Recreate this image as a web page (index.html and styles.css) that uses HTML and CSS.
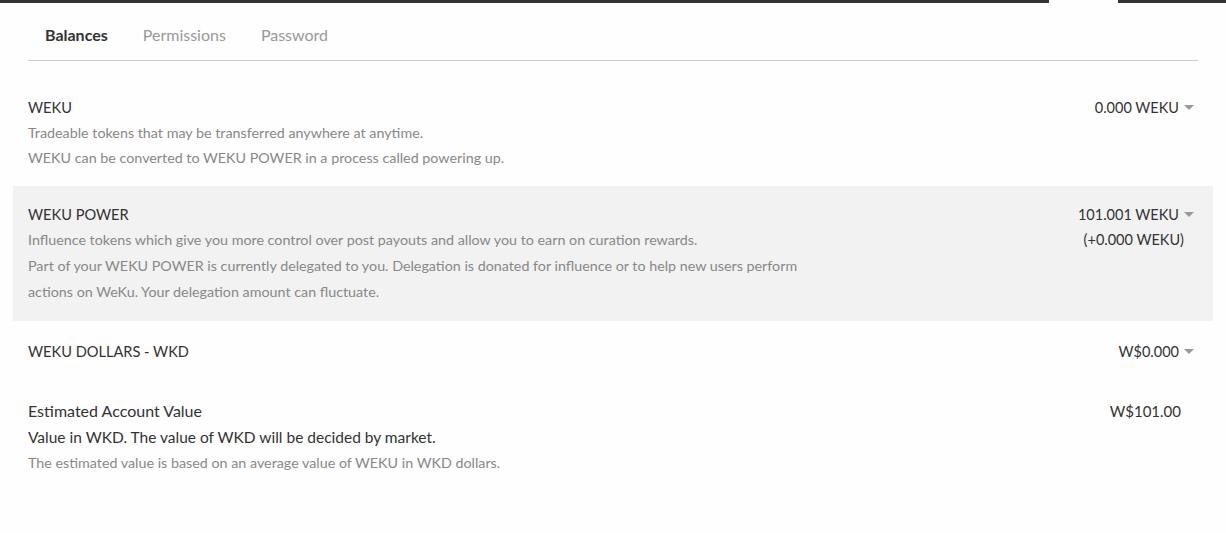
FILE: index.html
```html
<!DOCTYPE html>
<html lang="en">
<head>
<meta charset="utf-8">
<title>Wallet</title>
<link rel="stylesheet" href="styles.css">
</head>
<body>
<div class="topbar"><span class="seg dark left"></span><span class="seg gap"></span><span class="seg dark right"></span></div>
<div class="container">
  <nav class="tabs">
    <a class="tab active">Balances</a>
    <a class="tab">Permissions</a>
    <a class="tab">Password</a>
  </nav>

  <div class="row">
    <div class="info">
      <div class="title">WEKU</div>
      <div class="desc">Tradeable tokens that may be transferred anywhere at anytime.</div>
      <div class="desc">WEKU can be converted to WEKU POWER in a process called powering up.</div>
    </div>
    <div class="amount">
      <div class="dd">0.000 WEKU <span class="caret"></span></div>
    </div>
  </div>

  <div class="row zebra">
    <div class="info">
      <div class="title">WEKU POWER</div>
      <div class="desc">Influence tokens which give you more control over post payouts and allow you to earn on curation rewards.</div>
      <div class="desc narrow">Part of your WEKU POWER is currently delegated to you. Delegation is donated for influence or to help new users perform actions on WeKu. Your delegation amount can fluctuate.</div>
    </div>
    <div class="amount">
      <div class="dd">101.001 WEKU <span class="caret"></span></div>
      <div class="delegated">(+0.000 WEKU)</div>
    </div>
  </div>

  <div class="row wkd">
    <div class="info">
      <div class="title">WEKU DOLLARS - WKD</div>
    </div>
    <div class="amount">
      <div class="dd">W$0.000 <span class="caret"></span></div>
    </div>
  </div>

  <div class="row estimate">
    <div class="info">
      <div class="title big">Estimated Account Value</div>
      <div class="strong">Value in WKD. The value of WKD will be decided by market.</div>
      <div class="desc">The estimated value is based on an average value of WEKU in WKD dollars.</div>
    </div>
    <div class="amount">
      <div class="total">W$101.00</div>
    </div>
  </div>
</div>
</body>
</html>
```

FILE: styles.css
```css
html, body {
  margin: 0;
  padding: 0;
  background: #fefefe;
}
body {
  font-family: Lato, "Open Sans", sans-serif;
  color: #333;
}
.topbar {
  display: flex;
  height: 3px;
}
.seg.dark { background: #333; }
.seg.left { width: 1049px; }
.seg.gap { width: 69px; }
.seg.right { flex: 1; }

.container {
  width: 1200px;
  margin: 0 auto;
}
.tabs {
  display: flex;
  margin: 0 15px 18px;
  padding-top: 22px;
  border-bottom: 1px solid #ccc;
}
.tab {
  padding: 0 17px 15px;
  font-size: 16px;
  line-height: 20px;
  color: #999;
}
.tab:nth-child(2) {
  padding-right: 18px;
}
.tab.active {
  color: #333;
  font-weight: 700;
}
.tab.active + .tab {
  padding-left: 18px;
}

.row {
  display: flex;
  justify-content: space-between;
  padding: 16px 15px;
}
.row.zebra {
  background: #f2f2f2;
}
.row.wkd {
  padding: 18px 15px 16px;
}
.row.estimate {
  padding: 18px 15px;
}
.info {
  flex: 1;
}
.title {
  font-size: 14.6px;
  line-height: 25px;
  color: #333;
}
.title.big {
  font-size: 16px;
  line-height: 26px;
}
.desc {
  font-size: 14.3px;
  line-height: 25px;
  color: #888;
}
.zebra .desc {
  line-height: 26px;
}
.desc.narrow {
  max-width: 770px;
}
.strong {
  font-size: 15.5px;
  line-height: 26px;
  color: #333;
}
.amount {
  text-align: right;
  font-size: 14.5px;
  line-height: 25px;
  color: #333;
}
.dd {
  display: flex;
  align-items: center;
  justify-content: flex-end;
  gap: 5px;
}
.caret {
  display: inline-block;
  width: 0;
  height: 0;
  border-left: 5px solid transparent;
  border-right: 5px solid transparent;
  border-top: 5px solid #999;
  margin-right: 4px;
}
.delegated {
  padding-right: 14px;
  line-height: 26px;
}
.total {
  padding-right: 17px;
  line-height: 26px;
  font-size: 15px;
}
```
